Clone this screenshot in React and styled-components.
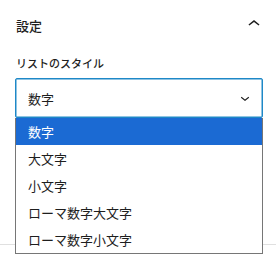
import React from "react";
import styled, { createGlobalStyle } from "styled-components";

const GlobalStyle = createGlobalStyle`
  html, body {
    margin: 0;
    background: #fff;
    font-family: "Noto Sans CJK JP", "Noto Sans", sans-serif;
    color: #1e1e1e;
  }
`;

const options = ["数字", "大文字", "小文字", "ローマ数字大文字", "ローマ数字小文字"];

const App = () => {
  return (
    <Page>
      <GlobalStyle />
      <Panel>
        <PanelHeader>
          <span>設定</span>
          <svg width="24" height="24" viewBox="0 0 24 24">
            <path d="M6.5 12.4L12 8l5.5 4.4-.9 1.2L12 10l-4.6 3.6-1-1.2z" fill="#1e1e1e" />
          </svg>
        </PanelHeader>
        <Label>リストのスタイル</Label>
        <SelectWrap>
          <SelectBox>
            <span>数字</span>
            <svg width="18" height="18" viewBox="0 0 24 24">
              <path d="M17.5 11.6L12 16l-5.5-4.4.9-1.2L12 14l4.6-3.6 1 1.2z" fill="#1e1e1e" />
            </svg>
          </SelectBox>
          <Dropdown>
            {options.map((o, i) => (
              <Option key={o} $active={i === 0}>
                {o}
              </Option>
            ))}
          </Dropdown>
        </SelectWrap>
      </Panel>
    </Page>
  );
};

const Page = styled.div`
  min-height: 259px;
  background: #fff;
`;

const Panel = styled.div`
  height: 245px;
  box-sizing: border-box;
  padding: 0 16px 0 15px;
  border-bottom: 1px solid #e0e0e0;
`;

const PanelHeader = styled.div`
  height: 51px;
  display: flex;
  align-items: center;
  justify-content: space-between;
  padding-left: 1px;
  font-size: 13px;
  font-weight: 500;
  svg {
    margin-right: -6px;
    margin-top: -4px;
  }
`;

const Label = styled.div`
  margin-top: 4px;
  padding-left: 1px;
  font-size: 11px;
  font-weight: 500;
  line-height: 16px;
`;

const SelectWrap = styled.div`
  position: relative;
  margin-top: 7px;
  width: 248px;
`;

const SelectBox = styled.div`
  height: 40px;
  box-sizing: border-box;
  border: 1px solid #1e88c7;
  box-shadow: inset 0 0 0 0.5px #1e88c7;
  border-radius: 2px;
  display: flex;
  align-items: center;
  justify-content: space-between;
  padding: 0 8px 0 12px;
  font-size: 13px;
  svg {
    margin-top: -1px;
  }
`;

const Dropdown = styled.div`
  position: absolute;
  z-index: 10;
  top: 40px;
  left: 0;
  right: 0;
  background: #fff;
  border: 1px solid #767676;
  border-top: none;
`;

const Option = styled.div`
  height: 27px;
  display: flex;
  align-items: center;
  padding-left: 12px;
  font-size: 13px;
  background: ${(p) => (p.$active ? "#1b6ad3" : "#fff")};
  color: ${(p) => (p.$active ? "#fff" : "#1e1e1e")};
`;

export default App;
